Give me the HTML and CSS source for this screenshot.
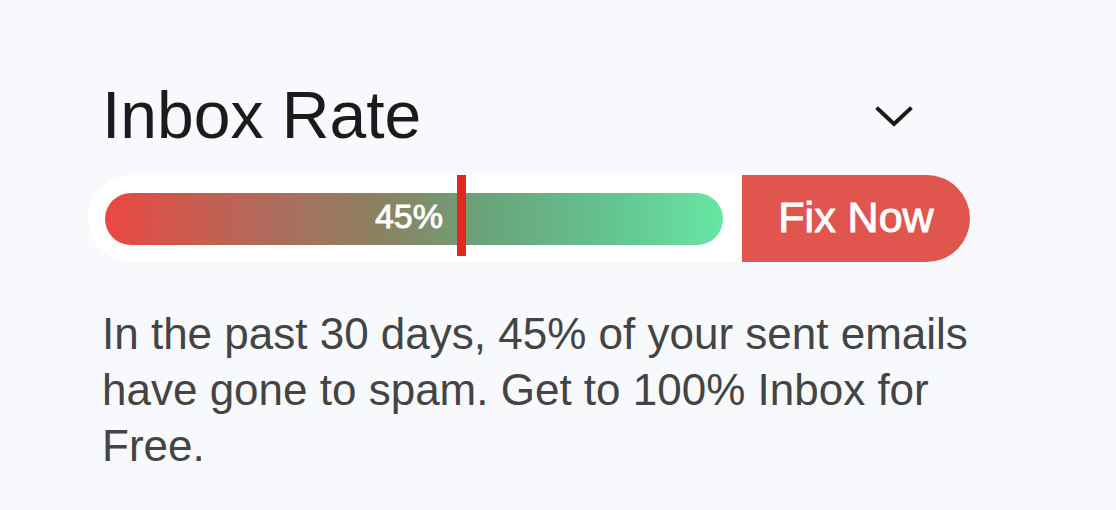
FILE: index.html
```html
<!DOCTYPE html>
<html lang="en">
<head>
<meta charset="utf-8">
<title>Inbox Rate</title>
<link rel="stylesheet" href="styles.css">
</head>
<body>
<section class="card">
  <header class="head">
    <h1 class="title">Inbox Rate</h1>
    <button class="toggle" aria-label="Collapse">
      <svg width="40" height="26" viewBox="0 0 40 26" fill="none" stroke="#1a1a1a" stroke-width="4" stroke-linecap="square" stroke-linejoin="miter">
        <path d="M4 5 L20 20 L36 5"/>
      </svg>
    </button>
  </header>
  <div class="meter">
    <div class="track">
      <div class="bar">
        <span class="pct">45%</span>
      </div>
      <span class="marker"></span>
    </div>
    <a class="fix" href="#">Fix Now</a>
  </div>
  <p class="desc">In the past 30 days, 45% of your sent emails have gone to spam. Get to 100% Inbox for Free.</p>
</section>
</body>
</html>
```
FILE: styles.css
```css
html, body {
  margin: 0;
  padding: 0;
  background: #f8f9fd;
}
body {
  font-family: "Liberation Sans", Arial, Helvetica, sans-serif;
}
.card {
  width: 882px;
  padding: 82px 0 0 88px;
}
.head {
  display: flex;
  align-items: center;
  justify-content: space-between;
  height: 66px;
  padding: 0 56px 0 14px;
}
.title {
  margin: 0;
  font-size: 66px;
  line-height: 66px;
  font-weight: 400;
  color: #1b1b1b;
}
.toggle {
  border: 0;
  background: none;
  padding: 0;
  margin-top: 4px;
  display: flex;
}
.meter {
  display: flex;
  margin-top: 27px;
  height: 87px;
}
.track {
  position: relative;
  width: 654px;
  box-sizing: border-box;
  padding: 18px 19px 17px 17px;
  background: #ffffff;
  border-radius: 44px 0 0 44px;
}
.bar {
  height: 52px;
  border-radius: 26px;
  background: linear-gradient(90deg, #ea4840 0%, #b2695a 25%, #8a8262 45%, #6aa47b 62%, #63c48f 82%, #67e6a3 100%);
  display: flex;
  align-items: center;
}
.pct {
  width: 338px;
  text-align: right;
  color: #ffffff;
  font-size: 34px;
  font-weight: 400;
  -webkit-text-stroke: 0.9px #ffffff;
  padding-bottom: 6px;
}
.marker {
  position: absolute;
  left: 369px;
  top: 0;
  width: 9px;
  height: 81px;
  background: #e0281f;
}
.fix {
  width: 228px;
  display: flex;
  align-items: center;
  justify-content: center;
  background: #e0554e;
  color: #ffffff;
  text-decoration: none;
  font-size: 43px;
  font-weight: 400;
  -webkit-text-stroke: 1px #ffffff;
  border-radius: 0 44px 44px 0;
  padding-bottom: 2px;
  box-sizing: border-box;
}
.desc {
  margin: 44px 0 0 14px;
  width: 880px;
  font-size: 44px;
  line-height: 56px;
  color: #444444;
}
```
